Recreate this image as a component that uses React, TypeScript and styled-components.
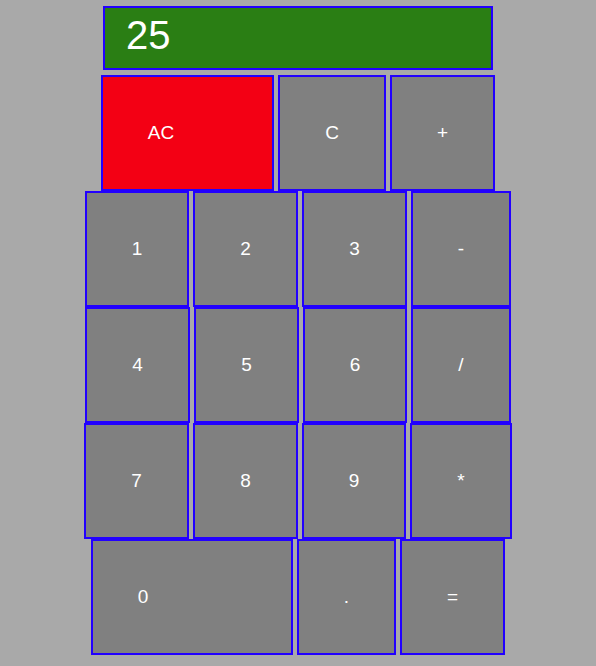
import React from "react";
import styled, { createGlobalStyle } from "styled-components";

const Global = createGlobalStyle`
  html, body {
    margin: 0;
    padding: 0;
    background: #a9a9a9;
    font-family: "Liberation Sans", Arial, sans-serif;
  }
`;

const Calculator = styled.div`
  display: flex;
  flex-direction: column;
  align-items: center;
  padding-top: 6px;
`;

const Display = styled.div`
  box-sizing: border-box;
  width: 390px;
  height: 64px;
  margin-bottom: 5px;
  padding: 5px 21px;
  background: #2a7e14;
  border: 2px solid #2200ff;
  color: #ffffff;
  font-size: 40px;
  line-height: normal;
`;

const Row = styled.div`
  display: flex;
  justify-content: center;
  gap: 4px;
  height: 116px;
`;

const Key = styled.button<{ $w: number; $red?: boolean; $extra?: number }>`
  box-sizing: border-box;
  width: ${(p) => p.$w}px;
  height: 116px;
  margin: 0;
  padding: 0 ${(p) => p.$extra ?? 0}px 0 0;
  display: flex;
  align-items: center;
  justify-content: center;
  background: ${(p) => (p.$red ? "#f30014" : "#808080")};
  border: 2px solid #2200ff;
  color: #ffffff;
  font-family: "Liberation Sans", Arial, sans-serif;
  font-size: 19px;
  cursor: pointer;
`;

type K = { label: string; w: number; red?: boolean; extra?: number };

const rows: K[][] = [
  [
    { label: "AC", w: 173, red: true, extra: 53 },
    { label: "C", w: 108 },
    { label: "+", w: 105 },
  ],
  [
    { label: "1", w: 104 },
    { label: "2", w: 105 },
    { label: "3", w: 105 },
    { label: "-", w: 100 },
  ],
  [
    { label: "4", w: 105 },
    { label: "5", w: 105 },
    { label: "6", w: 104 },
    { label: "/", w: 100 },
  ],
  [
    { label: "7", w: 105 },
    { label: "8", w: 105 },
    { label: "9", w: 104 },
    { label: "*", w: 102 },
  ],
  [
    { label: "0", w: 202, extra: 98 },
    { label: ".", w: 99 },
    { label: "=", w: 105 },
  ],
];

export default function App() {
  return (
    <>
      <Global />
      <Calculator>
        <Display>25</Display>
        {rows.map((r, i) => (
          <Row key={i}>
            {r.map((k) => (
              <Key key={k.label} $w={k.w} $red={k.red} $extra={k.extra}>
                {k.label}
              </Key>
            ))}
          </Row>
        ))}
      </Calculator>
    </>
  );
}
